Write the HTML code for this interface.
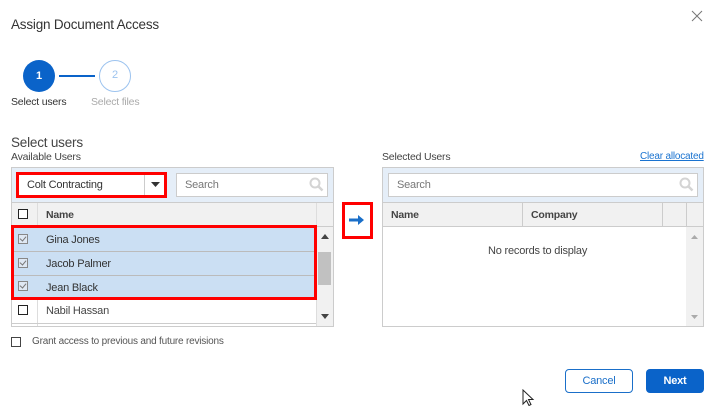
<!DOCTYPE html>
<html><head><meta charset="utf-8"><style>
*{box-sizing:border-box;margin:0;padding:0}
body{width:716px;height:406px;background:#fff;font-family:"Liberation Sans",sans-serif;color:#333;position:relative;overflow:hidden;font-size:11px;letter-spacing:-0.2px}
.a{position:absolute}
.t{white-space:nowrap}
.cb{position:absolute;width:10px;height:10px;border:1.3px solid #222;background:#fff}
.cbs{border-color:#888;background:#dfe8f3}
.cbs:after{content:"";position:absolute;left:2px;top:0px;width:3px;height:5px;border-right:1.2px solid #777;border-bottom:1.2px solid #777;transform:rotate(40deg)}
.red{position:absolute;border:3px solid #f00}
</style></head><body>
<div class="a t" style="left:11px;top:17px;font-size:13.5px;color:#333">Assign Document Access</div>
<svg class="a" style="left:691px;top:10px" width="12" height="12"><path d="M1 1L11 11M11 1L1 11" stroke="#777" stroke-width="1"/></svg>

<div class="a" style="left:23px;top:60px;width:32px;height:32px;border-radius:50%;background:#0a63c9;color:#fff;text-align:center;line-height:32px;font-size:11px;font-weight:bold">1</div>
<div class="a" style="left:59px;top:75px;width:36px;height:1.5px;background:#0a63c9"></div>
<div class="a" style="left:99px;top:60px;width:32px;height:32px;border-radius:50%;border:1.5px solid #9cc3ef;color:#9cc3ef;text-align:center;line-height:29px;font-size:11px">2</div>
<div class="a t" style="left:11px;top:96px;font-size:10.5px;color:#333">Select users</div>
<div class="a t" style="left:91px;top:96px;font-size:10.5px;color:#aaa">Select files</div>

<div class="a t" style="left:11px;top:135px;font-size:13.5px;color:#444">Select users</div>
<div class="a t" style="left:11px;top:151px;font-size:10.5px;color:#444">Available Users</div>

<div class="a" style="left:11px;top:167px;width:323px;height:160px;border:1px solid #ccc;background:#fff"></div>
<div class="a" style="left:12px;top:168px;width:321px;height:35px;background:#e5eef8;border-bottom:1px solid #ccc"></div>
<div class="a" style="left:18px;top:173px;width:147px;height:24px;background:#fff"></div>
<div class="a t" style="left:27px;top:179px;font-size:11px;color:#333">Colt Contracting</div>
<div class="a" style="left:144px;top:175px;width:1px;height:20px;background:#ccc"></div>
<svg class="a" style="left:151px;top:182px" width="9" height="6"><path d="M0 0H9L4.5 5Z" fill="#333"/></svg>
<div class="red" style="left:16px;top:172px;width:151px;height:26px"></div>
<div class="a" style="left:176px;top:173px;width:152px;height:24px;background:#fff;border:1px solid #ccc"></div>
<div class="a t" style="left:185px;top:179px;font-size:11px;color:#777">Search</div>
<svg class="a" style="left:309px;top:177px" width="15" height="15"><circle cx="6" cy="6" r="4.5" fill="none" stroke="#d4d4d4" stroke-width="2"/><path d="M9.5 9.5L13.5 13.5" stroke="#d4d4d4" stroke-width="2.5"/></svg>

<div class="a" style="left:12px;top:203px;width:321px;height:24px;background:#f1f1f1;border-bottom:1px solid #ccc"></div>
<div class="a" style="left:37px;top:203px;width:1px;height:123px;background:#ddd"></div>
<div class="a" style="left:316px;top:203px;width:1px;height:123px;background:#ddd"></div>
<div class="cb" style="left:18px;top:209px"></div>
<div class="a t" style="left:46px;top:209px;font-size:10.5px;font-weight:bold;color:#444">Name</div>

<div class="a" style="left:12px;top:227px;width:304px;height:72px;background:#cbdff3"></div>
<div class="a" style="left:12px;top:251px;width:304px;height:1px;background:#bbb"></div>
<div class="a" style="left:12px;top:275px;width:304px;height:1px;background:#bbb"></div>
<div class="a" style="left:12px;top:299px;width:304px;height:1px;background:#ccc"></div>
<div class="a" style="left:12px;top:323px;width:304px;height:1px;background:#ccc"></div>
<div class="cb cbs" style="left:18px;top:234px"></div>
<div class="cb cbs" style="left:18px;top:258px"></div>
<div class="cb cbs" style="left:18px;top:281px"></div>
<div class="cb" style="left:18px;top:305px"></div>
<div class="a t" style="left:46px;top:234px;font-size:11px;color:#333">Gina Jones</div>
<div class="a t" style="left:46px;top:258px;font-size:11px;color:#333">Jacob Palmer</div>
<div class="a t" style="left:46px;top:282px;font-size:11px;color:#333">Jean Black</div>
<div class="a t" style="left:46px;top:305px;font-size:11px;color:#444">Nabil Hassan</div>
<div class="a" style="left:317px;top:227px;width:16px;height:99px;background:#f1f1f1"></div>
<svg class="a" style="left:321px;top:234px" width="8" height="5"><path d="M0 5H8L4 0Z" fill="#444"/></svg>
<div class="a" style="left:318px;top:252px;width:13px;height:33px;background:#c1c1c1"></div>
<svg class="a" style="left:321px;top:314px" width="8" height="5"><path d="M0 0H8L4 5Z" fill="#444"/></svg>
<div class="red" style="left:11px;top:225px;width:306px;height:75px"></div>

<div class="red" style="left:342px;top:202px;width:31px;height:37px"></div>
<svg class="a" style="left:349px;top:214px" width="17" height="12"><path d="M0 4.5H9V1L15 6L9 11V7.5H0Z" fill="#1a6fc9"/></svg>

<div class="a t" style="left:382px;top:151px;font-size:10.5px;color:#444">Selected Users</div>
<div class="a t" style="left:640px;top:151px;font-size:10px;color:#1a73d0;text-decoration:underline">Clear allocated</div>
<div class="a" style="left:382px;top:167px;width:322px;height:160px;border:1px solid #ccc;background:#fff"></div>
<div class="a" style="left:383px;top:168px;width:320px;height:35px;background:#e5eef8;border-bottom:1px solid #ccc"></div>
<div class="a" style="left:388px;top:173px;width:310px;height:24px;background:#fff;border:1px solid #ccc"></div>
<div class="a t" style="left:397px;top:179px;font-size:11px;color:#777">Search</div>
<svg class="a" style="left:679px;top:177px" width="15" height="15"><circle cx="6" cy="6" r="4.5" fill="none" stroke="#d4d4d4" stroke-width="2"/><path d="M9.5 9.5L13.5 13.5" stroke="#d4d4d4" stroke-width="2.5"/></svg>
<div class="a" style="left:383px;top:203px;width:320px;height:24px;background:#f1f1f1;border-bottom:1px solid #ccc"></div>
<div class="a" style="left:522px;top:203px;width:1px;height:24px;background:#ccc"></div>
<div class="a" style="left:662px;top:203px;width:1px;height:24px;background:#ccc"></div>
<div class="a" style="left:686px;top:203px;width:1px;height:24px;background:#ccc"></div>
<div class="a t" style="left:391px;top:209px;font-size:10.5px;font-weight:bold;color:#444">Name</div>
<div class="a t" style="left:531px;top:209px;font-size:10.5px;font-weight:bold;color:#444">Company</div>
<div class="a" style="left:686px;top:227px;width:17px;height:99px;background:#f1f1f1"></div>
<svg class="a" style="left:691px;top:235px" width="7" height="4"><path d="M0 4H7L3.5 0Z" fill="#aaa"/></svg>
<svg class="a" style="left:691px;top:315px" width="7" height="4"><path d="M0 0H7L3.5 4Z" fill="#aaa"/></svg>
<div class="a t" style="left:488px;top:245px;font-size:11px;color:#444">No records to display</div>

<div class="cb" style="left:11px;top:337px;width:10px;height:10px;border-color:#444"></div>
<div class="a t" style="left:32px;top:336px;font-size:10px;color:#555">Grant access to previous and future revisions</div>

<div class="a" style="left:565px;top:369px;width:68px;height:24px;border:1px solid #1a6fc9;border-radius:4px;color:#1a6fc9;text-align:center;line-height:22px;font-size:11px">Cancel</div>
<div class="a" style="left:646px;top:369px;width:58px;height:24px;background:#0a63c9;border-radius:4px;color:#fff;text-align:center;line-height:24px;font-size:11px;font-weight:bold">Next</div>
<svg class="a" style="left:522px;top:389px" width="14" height="17"><path d="M1 1V15L4.5 11.5L7 16.5L9 15.5L6.5 10.5H11Z" fill="#fff" stroke="#222" stroke-width="1"/></svg>
</body></html>
